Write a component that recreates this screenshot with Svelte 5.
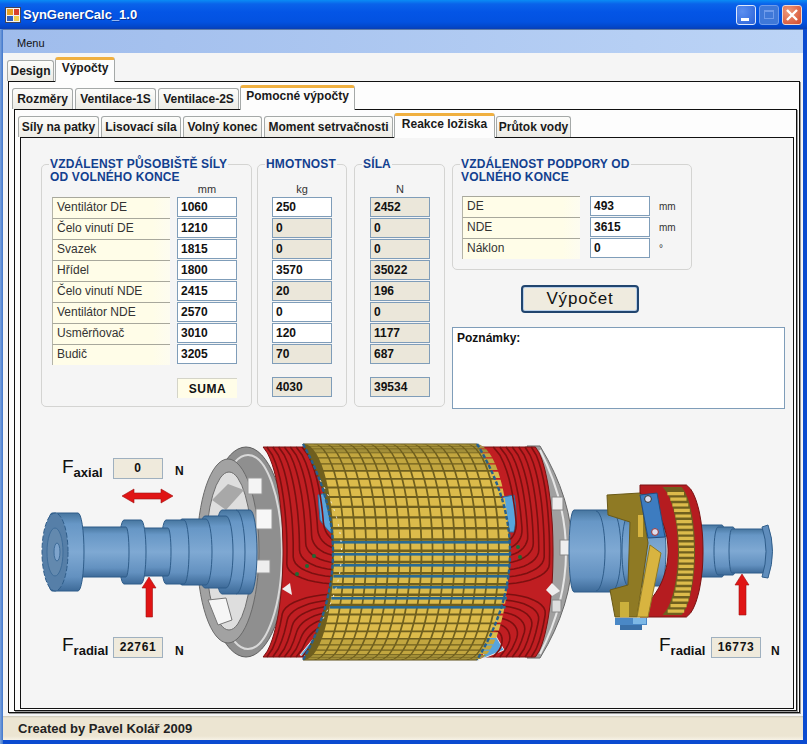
<script>
	const outerTabs = [
		{ label: 'Design', w: 47 },
		{ label: 'Výpočty', w: 60, active: true },
	]
	const midTabs = [
		{ label: 'Rozměry', w: 61 },
		{ label: 'Ventilace-1S', w: 81 },
		{ label: 'Ventilace-2S', w: 81 },
		{ label: 'Pomocné výpočty', w: 115, active: true },
	]
	const innerTabs = [
		{ label: 'Síly na patky', w: 81 },
		{ label: 'Lisovací síla', w: 80 },
		{ label: 'Volný konec', w: 79 },
		{ label: 'Moment setrvačnosti', w: 129 },
		{ label: 'Reakce ložiska', w: 101, active: true },
		{ label: 'Průtok vody', w: 75 },
	]

	const forces = [
		{ name: 'Ventilátor DE', pos: '1060', kg: '250', kgEdit: true, n: '2452' },
		{ name: 'Čelo vinutí DE', pos: '1210', kg: '0', n: '0' },
		{ name: 'Svazek', pos: '1815', kg: '0', n: '0' },
		{ name: 'Hřídel', pos: '1800', kg: '3570', kgEdit: true, n: '35022' },
		{ name: 'Čelo vinutí NDE', pos: '2415', kg: '20', n: '196' },
		{ name: 'Ventilátor NDE', pos: '2570', kg: '0', kgEdit: true, n: '0' },
		{ name: 'Usměrňovač', pos: '3010', kg: '120', kgEdit: true, n: '1177' },
		{ name: 'Budič', pos: '3205', kg: '70', n: '687' },
	]
	const supports = [
		{ name: 'DE', val: '493', unit: 'mm' },
		{ name: 'NDE', val: '3615', unit: 'mm' },
		{ name: 'Náklon', val: '0', unit: '°' },
	]

	// rotor geometry, all in page coordinates (the svg viewBox starts at 21,430)
	const CY = 552
	const bulge = (y, cy = CY, ry = 108) => {
		const t = Math.min(1, Math.abs(y - cy) / ry)
		return Math.sqrt(1 - t * t)
	}
	const f = (n) => n.toFixed(1)
	const statorLeft = (y) => 303 + 30 * bulge(y)
	const statorRight = (y) => 477 + 33 * bulge(y)

	function rowColor(lat) {
		const a = Math.abs(lat)
		if (a > 68) return '#a38f38'
		if (a > 48) return '#c2a63f'
		return '#dcbb4b'
	}

	const statorRows = []
	const ROWS = 30
	const COLS = 16
	for (let i = 0; i < ROWS; i++) {
		const a0 = -Math.PI / 2 + (i * Math.PI) / ROWS
		const a1 = a0 + (Math.PI / ROWS) * 0.78
		const y0 = CY + 108 * Math.sin(a0)
		const y1 = CY + 108 * Math.sin(a1)
		let d = ''
		for (let j = 0; j < COLS; j++) {
			const u0 = (j + 0.08) / COLS
			const u1 = (j + 0.92) / COLS
			const px = (y, u) => f(statorLeft(y) + u * (statorRight(y) - statorLeft(y)))
			d += `M${px(y0, u0)},${f(y0)}L${px(y0, u1)},${f(y0)}L${px(y1, u1)},${f(y1)}L${px(y1, u0)},${f(y1)}Z`
		}
		statorRows.push({ d, fill: rowColor((a0 * 180) / Math.PI) })
	}
	const blueBars = [541, 553, 564, 575, 586, 597, 606]

	// winding sides: outer edge runs along the end ring, inner edge along the stator
	const sides = {
		left: { outer: (y) => 257 + 26 * bulge(y), inner: statorLeft },
		right: { outer: (y) => 530 + 23 * bulge(y), inner: statorRight },
	}

	function stripe(side, u, yStart, yEnd) {
		const s = sides[side]
		const dir = yEnd > yStart ? 1 : -1
		const r = 20
		const pts = []
		const at = (y, uu) => `${f(s.outer(y) + uu * (s.inner(y) - s.outer(y)))},${f(y)}`
		for (let y = yStart; dir * (y - (yEnd - dir * r)) < 0; y += dir * 8) pts.push(at(y, u))
		for (let i = 0; i <= 10; i++) {
			const p = (i / 10) * (Math.PI / 2)
			pts.push(at(yEnd - dir * r + dir * r * Math.sin(p), u + (1.15 - u) * (1 - Math.cos(p))))
		}
		return 'M' + pts.join('L')
	}

	function silhouette(side) {
		const s = sides[side]
		const a = []
		const b = []
		for (let y = 447; y <= 657; y += 6) {
			a.push(`${f(s.outer(y))},${y}`)
			b.unshift(`${f(s.inner(y) + (side === 'left' ? 12 : -12))},${y}`)
		}
		return 'M' + a.concat(b).join('L') + 'Z'
	}

	const stripes = []
	for (const side of ['left', 'right']) {
		for (let k = 0; k < 7; k++) {
			stripes.push(stripe(side, 0.08 + k * 0.125, 447, 584 - k * 7))
			stripes.push(stripe(side, 0.08 + k * 0.125, 657, 594 + k * 6))
		}
	}

	const barrel = (x1, x2, h, cy, rx = 6) =>
		`M${x1},${cy - h}L${x2},${cy - h}A${rx},${h} 0 0 1 ${x2},${cy + h}L${x1},${cy + h}A${rx},${h} 0 0 1 ${x1},${cy - h}Z`

	const leftShaft = [
		[222, 250, 42, 7],
		[205, 226, 36, 7],
		[182, 206, 33, 6],
		[166, 184, 32, 5],
		[138, 168, 24, 3],
		[124, 141, 32, 5],
		[80, 126, 25, 3],
		[52, 78, 39, 6],
	]
	const rightShaft = [
		[574, 628, 41, 5],
		[628, 660, 35, 6],
		[700, 722, 26, 4],
		[718, 733, 24, 4],
		[732, 765, 22, 3],
	]

	// exciter wheel
	const wheelC = (y) => bulge(y, 551, 67)
	const wheelRed = (() => {
		const a = []
		const b = []
		for (let y = 485; y <= 618; y += 4) {
			a.push(`${f(Math.max(640, 612 + 56 * wheelC(y)))},${y}`)
			b.unshift(`${f(683 + 20 * wheelC(y))},${y}`)
		}
		return 'M' + a.concat(b).join('L') + 'Z'
	})()
	const wheelBand = (() => {
		const a = []
		const b = []
		for (let y = 487; y <= 616; y += 4) {
			a.push(`${f(656 + 22 * wheelC(y))},${y}`)
			b.unshift(`${f(676 + 19 * wheelC(y))},${y}`)
		}
		return 'M' + a.concat(b).join('L') + 'Z'
	})()
	let wheelTeeth = ''
	for (let y = 492; y < 612; y += 5.6) {
		const l = f(657 + 22 * wheelC(y))
		const r = f(675 + 19 * wheelC(y))
		wheelTeeth += `M${l},${y}L${r},${y}L${r},${y + 3.2}L${l},${y + 3.2}Z`
	}
	const spots = [[307, 566], [297, 574], [314, 556], [518, 547], [520, 557]]
</script>

<div class="window">
	<header class="titlebar">
		<svg class="appicon" width="16" height="16" viewBox="0 0 16 16">
			<rect x="0.5" y="0.5" width="15" height="15" fill="#f2f2f2" stroke="#445" />
			<rect x="2" y="2" width="6" height="6" fill="#e8a020" />
			<rect x="9" y="2" width="5" height="6" fill="#d8402c" />
			<rect x="2" y="9" width="6" height="5" fill="#3060c0" />
			<rect x="9" y="9" width="5" height="5" fill="#f0d050" />
		</svg>
		<span class="title">SynGenerCalc_1.0</span>
		<div class="winbtns">
			<span class="winbtn min"><i></i></span>
			<span class="winbtn max"><i></i></span>
			<span class="winbtn close">
				<svg width="20" height="20" viewBox="0 0 20 20"><path d="M5 5 L15 15 M15 5 L5 15" stroke="#fff" stroke-width="2.4" /></svg>
			</span>
		</div>
	</header>

	<div class="frame">
		<nav class="menubar">Menu</nav>

		<div class="client">
			<div class="tabs outer">
				{#each outerTabs as t}
					<div class="tab" class:active={t.active} style:width="{t.w}px">{t.label}</div>
				{/each}
			</div>
			<div class="panel p1">
				<div class="tabs mid">
					{#each midTabs as t}
						<div class="tab" class:active={t.active} style:width="{t.w}px">{t.label}</div>
					{/each}
				</div>
				<div class="panel p2">
					<div class="tabs inner">
						{#each innerTabs as t}
							<div class="tab" class:active={t.active} style:width="{t.w}px">{t.label}</div>
						{/each}
					</div>
					<div class="panel p3">
						<div class="groups">
							<section class="group g1">
								<h3>VZDÁLENST PŮSOBIŠTĚ SÍLY<br />OD VOLNÉHO KONCE</h3>
								<div class="unit u1">mm</div>
								{#each forces as r}
									<div class="row">
										<div class="name">{r.name}</div>
										<div class="field">{r.pos}</div>
									</div>
								{/each}
								<div class="row sum">
									<div></div>
									<div class="suma">SUMA</div>
								</div>
							</section>

							<section class="group g2">
								<h3>HMOTNOST</h3>
								<div class="unit">kg</div>
								{#each forces as r}
									<div class="field" class:ro={!r.kgEdit}>{r.kg}</div>
								{/each}
								<div class="field ro total">4030</div>
							</section>

							<section class="group g3">
								<h3>SÍLA</h3>
								<div class="unit">N</div>
								{#each forces as r}
									<div class="field ro">{r.n}</div>
								{/each}
								<div class="field ro total">39534</div>
							</section>

							<div class="rightcol">
								<section class="group g4">
									<h3>VZDÁLENOST PODPORY OD<br />VOLNÉHO KONCE</h3>
									{#each supports as s}
										<div class="row support">
											<div class="name">{s.name}</div>
											<div class="field">{s.val}</div>
											<div class="sunit">{s.unit}</div>
										</div>
									{/each}
								</section>
								<button class="calc">Výpočet</button>
								<div class="notes">Poznámky:</div>
							</div>
						</div>

						<div class="scene">
							<svg width="771" height="277" viewBox="21 430 771 277">
								<defs>
									<linearGradient id="steel" x1="0" y1="0" x2="0" y2="1">
										<stop offset="0" stop-color="#47769f" />
										<stop offset="0.14" stop-color="#6797c6" />
										<stop offset="0.5" stop-color="#7fa9d3" />
										<stop offset="0.82" stop-color="#6391c0" />
										<stop offset="1" stop-color="#3d6a98" />
									</linearGradient>
								</defs>

								<!-- left end ring -->
								<ellipse cx="246" cy="552" rx="41" ry="105" fill="#8f8f8f" stroke="#5f5f5f" />
								<ellipse cx="248" cy="552" rx="34" ry="97" fill="none" stroke="#d9d9d9" stroke-width="2" />
								<ellipse cx="228" cy="551" rx="31" ry="92" fill="#a2a2a2" stroke="#6a6a6a" />
								<ellipse cx="229" cy="551" rx="23" ry="79" fill="#dedede" stroke="#6d6d6d" />
								<rect x="248" y="478" width="14" height="16" fill="#f4f4f4" stroke="#999" />
								<rect x="256" y="509" width="16" height="20" fill="#f7f7f7" stroke="#999" />
								<rect x="255" y="560" width="15" height="13" fill="#eee" stroke="#999" />
								<path d="M208 600 L226 598 L232 620 L218 625 Z" fill="#f6f6f6" stroke="#777" />
								<path d="M212 500 L228 484 L244 490 L226 510 Z" fill="#a8a8a8" />

								<!-- right end ring -->
								<path d="M527 446 L540 446 Q605 552 540 658 L527 658 Z" fill="#a0a0a0" stroke="#666" />
								<path d="M540 450 Q592 552 540 654" fill="none" stroke="#e6e6e6" stroke-width="2" />
								<rect x="552" y="497" width="11" height="13" fill="#eee" stroke="#888" />
								<rect x="560" y="540" width="12" height="15" fill="#eee" stroke="#888" />
								<rect x="552" y="600" width="9" height="12" fill="#ddd" stroke="#888" />

								<!-- windings -->
								<path d={silhouette('left')} fill="#c01e22" stroke="#7a1212" />
								<path d={silhouette('right')} fill="#c01e22" stroke="#7a1212" />
								<path d="M318 495 Q332 490 338 500 L340 540 Q326 530 320 520 Z" fill="#58a4dc" stroke="#2c6c9c" />
								<path d="M503 497 L514 495 Q518 515 514 532 L503 532 Z" fill="#58a4dc" stroke="#2c6c9c" />
								<path d="M300 655 L318 633 L330 640 L325 658 Z" fill="#58a4dc" stroke="#e6e6e6" />
								<path d="M484 658 L482 640 L494 633 L504 650 Z" fill="#58a4dc" stroke="#e6e6e6" />
								{#each stripes as d}
									<path {d} fill="none" stroke="#7c1010" stroke-width="1.6" />
								{/each}
								<path d="M282 589 L290 583 L292 595 Z" fill="#eee" />
								<path d="M552 583 L560 591 L552 596 L546 590 Z" fill="#eee" />
								{#each spots as [x, y]}
									<circle cx={x} cy={y} r="2" fill="#1e6b34" />
								{/each}

								<!-- stator -->
								<path d="M303 444 L477 444 Q543 552 477 660 L303 660 Q363 552 303 444 Z" fill="#6f5f1e" stroke="#5b4d16" />
								{#each statorRows as r}
									<path d={r.d} fill={r.fill} />
								{/each}
								{#each blueBars as y}
									<rect x={statorLeft(y) + 1} {y} width={statorRight(y) - statorLeft(y) - 1} height="2.6" fill="#2a6a92" />
								{/each}
								<path d="M303 444 Q363 552 303 660" fill="none" stroke="#26608e" stroke-width="2.4" stroke-dasharray="4 2" />
								<path d="M477 444 Q543 552 477 660" fill="none" stroke="#26608e" stroke-width="2.4" stroke-dasharray="4 2" />
								<path d="M320 480 Q363 552 320 624" fill="none" stroke="#f0f0f0" stroke-width="1" stroke-dasharray="2 6" />

								<!-- shaft, left -->
								{#each leftShaft as [a, b, h, rx]}
									<path d={barrel(a, b, h, CY, rx)} fill="url(#steel)" stroke="#2f5d8a" />
								{/each}
								<ellipse cx="55" cy="552" rx="13" ry="39" fill="#567fa8" stroke="#2f5d8a" stroke-dasharray="5 2" />
								<ellipse cx="55" cy="552" rx="8" ry="24" fill="#6389ae" stroke="#3f6d9a" />
								<ellipse cx="57" cy="552" rx="3" ry="9" fill="#7ea4cc" stroke="#3f6d9a" />
								<path d="M236 510 A9 42 0 0 1 236 594" fill="none" stroke="#2f5d8a" />

								<!-- shaft, right -->
								{#each rightShaft as [a, b, h, rx]}
									<path d={barrel(a, b, h, 551, rx)} fill="url(#steel)" stroke="#2f5d8a" />
								{/each}
								<path d="M596 511 A9 40 0 0 1 596 591 M612 511 A9 40 0 0 1 612 591" fill="none" stroke="#2f5d8a" />
								<path d="M762 527 Q770 551 762 577 L768 578 Q777 551 768 525 Z" fill="#5f8dbc" stroke="#2f5d8a" />

								<!-- exciter -->
								<path d="M607 495 L640 493 L648 543 L637 617 L615 617 L610 590 L628 585 L630 522 L608 515 Z" fill="#8f7a24" stroke="#6a5a18" />
								<path d={wheelRed} fill="#b51c20" stroke="#7a1212" />
								<path d={wheelBand} fill="#6f5f1e" />
								<path d={wheelTeeth} fill="#dcbb4b" />
								<path d="M650 545 L661 553 L648 617 L637 617 Z" fill="#d8b440" stroke="#8f7a24" />
								<rect x="620" y="602" width="9" height="15" fill="#cbb03c" />
								<rect x="638" y="515" width="5" height="22" fill="#d8b440" />
								<path d="M640 495 L657 493 L665 537 L648 538 Z" fill="#3d7cc0" stroke="#234e80" />
								<circle cx="648" cy="499" r="3.4" fill="#dde" stroke="#333" />
								<circle cx="655" cy="532" r="3.4" fill="#dde" stroke="#933" />
								<rect x="615" y="618" width="32" height="7" fill="#4a88c6" />
								<rect x="633" y="618" width="13" height="6" fill="#7db8e6" />
								<rect x="620" y="625" width="22" height="5" fill="#3a70a8" />

								<!-- arrows -->
								<path d="M122 496 L134 489 L134 493 L161 493 L161 489 L173 496 L161 503 L161 499 L134 499 L134 503 Z" fill="#e01414" stroke="#a01010" stroke-width="0.6" />
								<path d="M149 577 L156 588 L152.500 588 L152.500 617 L146 617 L146 588 L142 588 Z" fill="#e01414" stroke="#a01010" stroke-width="0.6" />
								<path d="M742 574 L749 585 L746 585 L746 615 L739 615 L739 585 L735 585 Z" fill="#e01414" stroke="#a01010" stroke-width="0.6" />
							</svg>

							<div class="force fa"><span class="big">F</span><span class="sub">axial</span></div>
							<div class="fbox fa-box center">0</div>
							<div class="newton fa-n">N</div>

							<div class="force fr"><span class="big">F</span><span class="sub">radial</span></div>
							<div class="fbox fr-box">22761</div>
							<div class="newton fr-n">N</div>

							<div class="force fr2"><span class="big">F</span><span class="sub">radial</span></div>
							<div class="fbox fr2-box">16773</div>
							<div class="newton fr2-n">N</div>
						</div>
					</div>
				</div>
			</div>
		</div>

		<footer class="status">Created by Pavel Kolář 2009</footer>
	</div>
</div>

<style>
	:global(body) {
		margin: 0;
		background: #f5f5f5;
	}
	.window {
		width: 807px;
		height: 744px;
		display: flex;
		flex-direction: column;
		font-family: 'Liberation Sans', Arial, sans-serif;
		overflow: hidden;
		background: linear-gradient(90deg, #7ba2dc 0, #3f76cc 3px, #0b4bd0 3px);
	}
	.titlebar {
		height: 29px;
		flex: none;
		display: flex;
		align-items: center;
		padding: 0 5px;
		box-sizing: border-box;
		background: linear-gradient(#0a8cf5 0, #0a63ea 4px, #0455e6 12px, #0352e0 22px, #0346c8 27px, #0a3fb4 29px);
	}
	.appicon {
		margin-right: 2px;
	}
	.title {
		color: #fff;
		font-weight: bold;
		font-size: 13px;
		text-shadow: 1px 1px 0 #0a2f8f;
	}
	.winbtns {
		margin-left: auto;
		display: flex;
		gap: 3px;
		margin-right: 0;
	}
	.winbtn {
		width: 20px;
		height: 20px;
		box-sizing: border-box;
		border: 1px solid #dfe8fb;
		border-radius: 3px;
		position: relative;
		display: block;
		background: radial-gradient(circle at 30% 30%, #5c8ff0, #2b62d8);
	}
	.winbtn.max {
		background: #3f78d8;
		border-color: #6f9bea;
	}
	.winbtn.close {
		background: radial-gradient(circle at 30% 30%, #ee9a7c, #d4492a);
		border-color: #f0d8d0;
	}
	.winbtn.close svg {
		position: absolute;
		left: -1px;
		top: -1px;
	}
	.winbtn.min i {
		position: absolute;
		left: 4px;
		bottom: 3px;
		width: 8px;
		height: 3px;
		background: #fff;
	}
	.winbtn.max i {
		position: absolute;
		left: 4px;
		top: 4px;
		width: 10px;
		height: 9px;
		border: 1px solid #6f9bea;
		border-top-width: 2px;
		box-sizing: border-box;
	}
	.frame {
		flex: 1;
		margin: 0 4px 4px 3px;
		display: flex;
		flex-direction: column;
		min-height: 0;
		background: #f5f5f5;
	}
	.menubar {
		height: 24px;
		flex: none;
		box-sizing: border-box;
		padding: 7px 0 0 14px;
		font-size: 11px;
		color: #111;
		background: linear-gradient(90deg, #9fbcec, #bcd4f6);
		border-top: 1px solid #5f7ca8;
	}
	.client {
		flex: 1;
		min-height: 0;
		display: flex;
		flex-direction: column;
		padding: 4px 0 0 4px;
		background: #f5f5f5;
	}
	.tabs {
		display: flex;
		align-items: flex-end;
		height: 25px;
		flex: none;
		position: relative;
		z-index: 1;
		margin-bottom: -1px;
		gap: 2px;
	}
	.tabs.mid,
	.tabs.inner {
		margin-left: -2px;
	}
	.tab {
		height: 21px;
		margin-bottom: 1px;
		box-sizing: border-box;
		border: 1px solid #a5a9a8;
		border-bottom: none;
		border-radius: 3px 3px 0 0;
		background: linear-gradient(#fdfdfb, #ecebe5);
		font-weight: bold;
		font-size: 12px;
		line-height: 20px;
		text-align: center;
		color: #1a1a1a;
		white-space: nowrap;
	}
	.tab.active {
		height: 25px;
		margin: 0 -1px;
		background: #fdfdfd;
		border-top: 3px solid #f0b040;
		line-height: 16px;
		padding-bottom: 4px;
	}
	.panel {
		flex: 1;
		min-height: 0;
		display: flex;
		flex-direction: column;
		box-sizing: border-box;
		border: 1px solid #111;
		box-shadow: 1px 1px 0 #9a9a9a;
		background: #fdfdfd;
	}
	.p1 {
		margin: 0 3px 0 1px;
		padding: 3px 2px 1px 5px;
	}
	.p2 {
		margin: 0;
		padding: 3px 2px 1px 5px;
	}
	.p3 {
		background: #f5f5f5;
		box-shadow: none;
	}
	.groups {
		display: flex;
		align-items: flex-start;
		padding: 26px 0 0 20px;
		height: 270px;
		box-sizing: border-box;
		flex: none;
	}
	.group {
		position: relative;
		box-sizing: border-box;
		border: 1px solid #d4d4d2;
		border-radius: 5px;
		height: 243px;
	}
	.group h3 {
		position: absolute;
		left: 7px;
		top: -7px;
		margin: 0;
		padding: 0 1px;
		font-size: 12px;
		line-height: 13px;
		letter-spacing: 0.15px;
		font-weight: bold;
		color: #12408f;
		background: #f5f5f5;
		white-space: nowrap;
	}
	.g1 {
		width: 211px;
		padding: 17px 0 0 10px;
		margin-right: 5px;
	}
	.g2 {
		width: 90px;
		padding: 17px 0 0 14px;
		margin-right: 7px;
	}
	.g3 {
		width: 91px;
		padding: 17px 0 0 15px;
		margin-right: 7px;
	}
	.rightcol {
		width: 333px;
		display: flex;
		flex-direction: column;
		align-items: flex-start;
	}
	.g4 {
		width: 240px;
		height: 106px;
		padding: 31px 0 0 9px;
	}
	.unit {
		height: 15px;
		width: 60px;
		font-size: 11px;
		line-height: 15px;
		text-align: center;
		color: #333;
	}
	.unit.u1 {
		margin-left: 125px;
	}
	.row {
		display: flex;
		gap: 7px;
		height: 21px;
	}
	.row.sum {
		margin-top: 13px;
	}
	.row.sum > div:first-child {
		width: 118px;
	}
	.row.support {
		gap: 10px;
	}
	.row.support .sunit {
		margin-left: -1px;
	}
	.name {
		width: 118px;
		height: 21px;
		box-sizing: border-box;
		border-top: 1px solid #a8a89c;
		border-left: 1px solid #b4b4a8;
		background: linear-gradient(90deg, #fffde8 85%, #fdfcf0);
		padding: 2px 0 0 4px;
		font-size: 12px;
		color: #333;
		white-space: nowrap;
	}
	.field {
		width: 60px;
		height: 20px;
		margin-bottom: 1px;
		box-sizing: border-box;
		border: 1px solid #7f9db9;
		background: #fff;
		padding-left: 3px;
		font-size: 12px;
		font-weight: bold;
		line-height: 18px;
		color: #111;
	}
	.field.ro {
		background: #ebe7da;
	}
	.field.total {
		margin-top: 13px;
	}
	.suma {
		width: 60px;
		height: 20px;
		box-sizing: border-box;
		border-top: 1px solid #d4d4c8;
		border-left: 1px solid #d4d4c8;
		background: #fffde8;
		text-align: center;
		font-size: 12px;
		font-weight: bold;
		line-height: 20px;
		letter-spacing: 0.5px;
		color: #111;
	}
	.sunit {
		font-size: 10px;
		color: #333;
		line-height: 22px;
	}
	.calc {
		margin: 15px 0 0 69px;
		width: 118px;
		height: 28px;
		box-sizing: border-box;
		border: 2px solid #21456f;
		border-radius: 4px;
		background: #efebdf;
		box-shadow: inset 0 0 0 1px #b9cfe8;
		font-family: inherit;
		font-size: 17px;
		letter-spacing: 0.8px;
		color: #111;
		padding: 0;
	}
	.notes {
		margin-top: 14px;
		width: 333px;
		height: 82px;
		box-sizing: border-box;
		border: 1px solid #7f9db9;
		background: #fff;
		padding: 3px 4px;
		font-size: 12px;
		font-weight: bold;
		color: #111;
	}
	.scene {
		position: relative;
		flex: 1;
		margin-top: 22px;
	}
	.scene svg {
		display: block;
	}
	.force {
		position: absolute;
		white-space: nowrap;
		color: #111;
	}
	.big {
		font-size: 19px;
		line-height: 22px;
	}
	.sub {
		font-size: 13px;
		font-weight: bold;
		position: relative;
		top: 4px;
	}
	.fbox {
		position: absolute;
		width: 50px;
		height: 21px;
		box-sizing: border-box;
		border: 1px solid #9fb0bf;
		background: #efeadc;
		font-size: 12px;
		font-weight: bold;
		line-height: 19px;
		text-align: center;
		letter-spacing: 0.6px;
		color: #111;
	}
	.newton {
		position: absolute;
		font-size: 12px;
		font-weight: bold;
		color: #111;
	}
	.fa {
		left: 41px;
		top: 26px;
	}
	.fa-box {
		left: 92px;
		top: 28px;
	}
	.fa-n {
		left: 154px;
		top: 34px;
	}
	.fr {
		left: 41px;
		top: 204px;
	}
	.fr-box {
		left: 92px;
		top: 207px;
	}
	.fr-n {
		left: 154px;
		top: 214px;
	}
	.fr2 {
		left: 638px;
		top: 204px;
	}
	.fr2-box {
		left: 690px;
		top: 207px;
	}
	.fr2-n {
		left: 750px;
		top: 214px;
	}
	.status {
		height: 24px;
		flex: none;
		box-sizing: border-box;
		margin-top: 3px;
		padding: 5px 0 0 15px;
		font-size: 13px;
		font-weight: bold;
		color: #222;
		background: linear-gradient(#c9c5b6 0, #ece5d2 2px, #ece5d2 20px, #f6f2e6);
	}
</style>
